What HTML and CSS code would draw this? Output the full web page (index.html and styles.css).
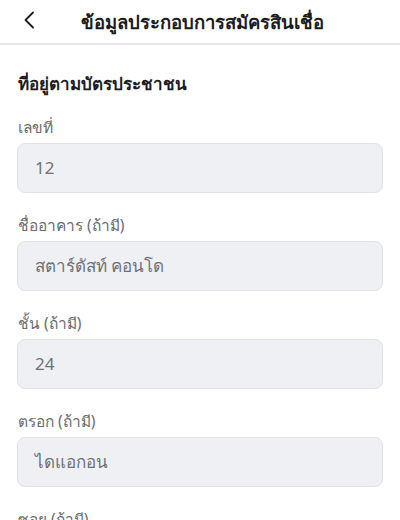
FILE: index.html
```html
<!DOCTYPE html>
<html lang="th">
<head>
<meta charset="utf-8">
<link rel="stylesheet" href="styles.css">
</head>
<body>
<header class="topbar">
  <button class="back" aria-label="back">
    <svg width="12" height="18" viewBox="0 0 12 18"><path d="M10 1.5 L2.5 9 L10 16.5" fill="none" stroke="#1c1c1e" stroke-width="1.8" stroke-linecap="round" stroke-linejoin="round"/></svg>
  </button>
  <h1 class="title">ข้อมูลประกอบการสมัครสินเชื่อ</h1>
</header>
<main class="content">
  <h2 class="section">ที่อยู่ตามบัตรประชาชน</h2>
  <div class="field">
    <label class="label">เลขที่</label>
    <div class="input">12</div>
  </div>
  <div class="field">
    <label class="label">ชื่ออาคาร (ถ้ามี)</label>
    <div class="input">สตาร์ดัสท์ คอนโด</div>
  </div>
  <div class="field">
    <label class="label">ชั้น (ถ้ามี)</label>
    <div class="input">24</div>
  </div>
  <div class="field">
    <label class="label">ตรอก (ถ้ามี)</label>
    <div class="input">ไดแอกอน</div>
  </div>
  <div class="field">
    <label class="label">ซอย (ถ้ามี)</label>
    <div class="input"></div>
  </div>
</main>
</body>
</html>
```
FILE: styles.css
```css
html, body {
  margin: 0;
  padding: 0;
  background: #ffffff;
  font-family: "Noto Sans", sans-serif;
  color: #1c1c1e;
}
.topbar {
  position: relative;
  height: 43px;
  display: flex;
  align-items: center;
  justify-content: center;
  border-bottom: 2px solid #e9e9ed;
}
.back {
  position: absolute;
  left: 18px;
  top: 9px;
  width: 22px;
  height: 22px;
  padding: 0;
  border: 0;
  background: none;
  display: flex;
  align-items: center;
  justify-content: center;
}
.title {
  margin: 0 0 0 4px;
  font-size: 18.5px;
  line-height: 26px;
  font-weight: 700;
  color: #1c1c1e;
}
.content {
  padding: 27px 17px 0 17px;
}
.section {
  margin: 0 0 21px 1px;
  font-size: 17px;
  line-height: 24px;
  font-weight: 700;
}
.field {
  display: flex;
  flex-direction: column;
  gap: 6px;
  margin-bottom: 22px;
}
.label {
  font-size: 15.5px;
  line-height: 20px;
  color: #6c6c70;
  margin-left: 1px;
}
.input {
  height: 48px;
  box-sizing: content-box;
  border: 1px solid #e1e2e9;
  border-radius: 8px;
  background: #eff0f4;
  display: flex;
  align-items: center;
  padding: 0 17px;
  font-size: 17px;
  line-height: 24px;
  color: #707074;
}
```
